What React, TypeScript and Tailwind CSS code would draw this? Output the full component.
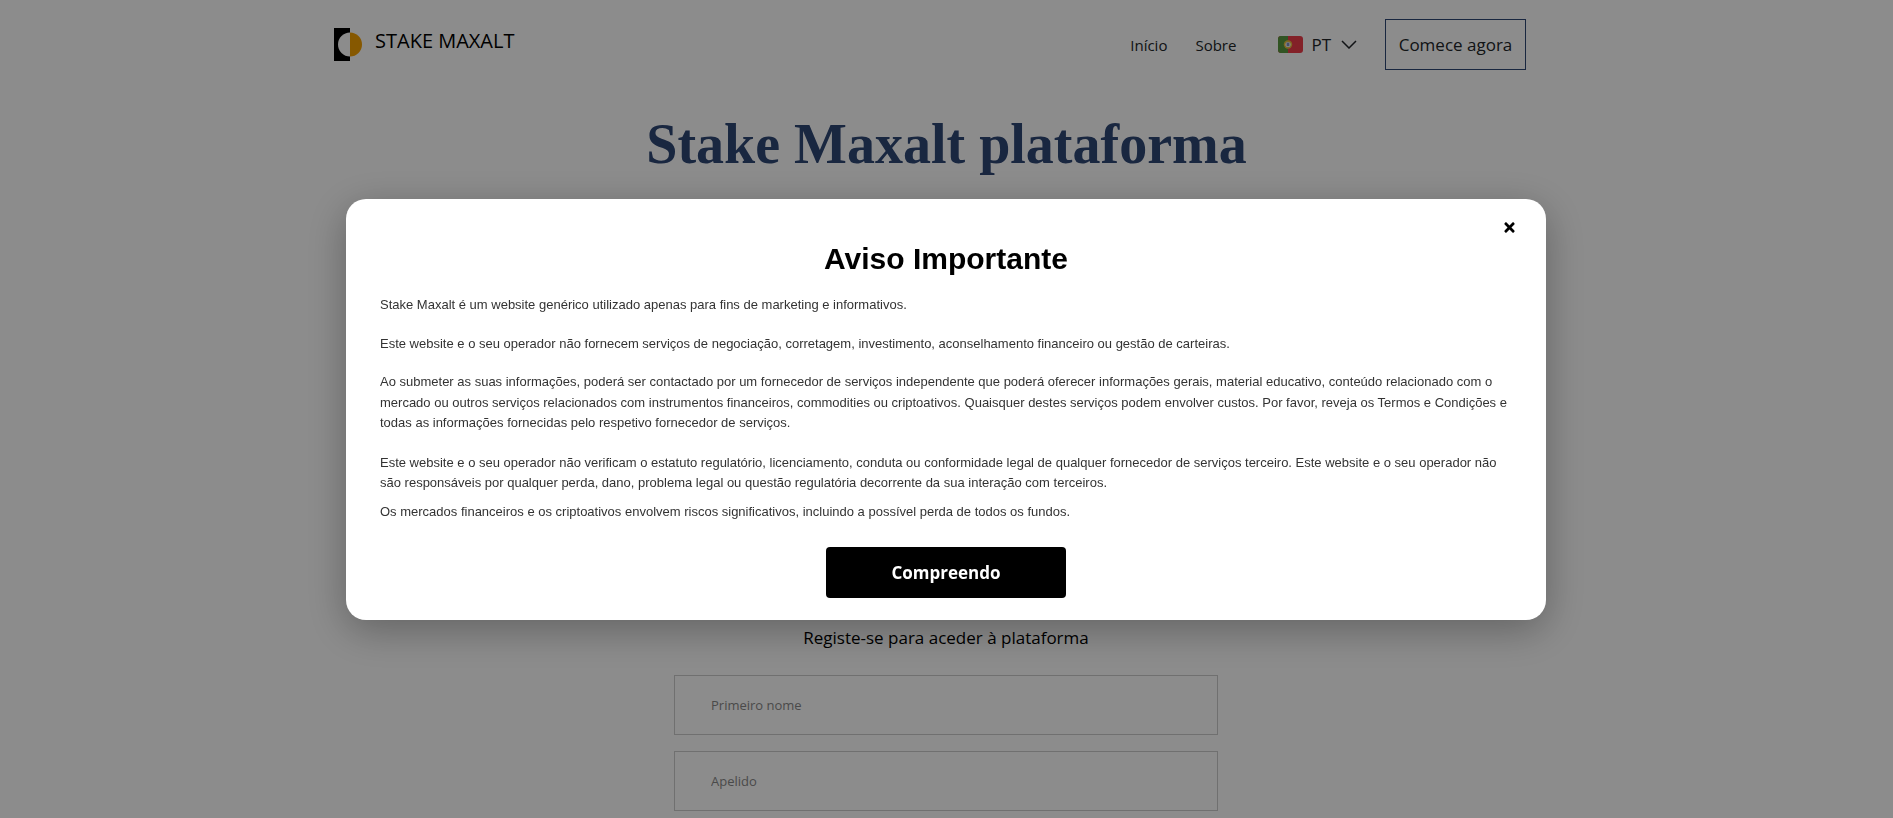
import { FaTimes } from 'react-icons/fa';

const bodyFont = "font-['Open_Sans','Noto_Sans',sans-serif]";

function Logo() {
  return (
    <svg width="28" height="33" viewBox="0 0 28 33" className="block">
      <rect x="0" y="0" width="16" height="33" fill="#000" />
      <path d="M16 4.5a12 12 0 0 0 0 24z" fill="#fff" />
      <path d="M16 4.5a12 12 0 0 1 0 24z" fill="#f5a000" />
    </svg>
  );
}

function Flag() {
  return (
    <svg width="25" height="17" viewBox="0 0 25 17" className="block">
      <rect width="25" height="17" rx="3" fill="#ee3c4a" />
      <path d="M3 0h7v17H3a3 3 0 0 1-3-3V3a3 3 0 0 1 3-3z" fill="#5a9a40" />
      <circle cx="10" cy="8.5" r="4.2" fill="#e8c040" />
      <circle cx="10" cy="8.5" r="2.6" fill="#fff" />
      <rect x="8.6" y="6.6" width="2.8" height="3.6" fill="#8090c0" />
    </svg>
  );
}

const paragraphs = [
  { text: 'Stake Maxalt é um website genérico utilizado apenas para fins de marketing e informativos.', mb: 'mb-[18px]' },
  { text: 'Este website e o seu operador não fornecem serviços de negociação, corretagem, investimento, aconselhamento financeiro ou gestão de carteiras.', mb: 'mb-[18px]' },
  { text: 'Ao submeter as suas informações, poderá ser contactado por um fornecedor de serviços independente que poderá oferecer informações gerais, material educativo, conteúdo relacionado com o mercado ou outros serviços relacionados com instrumentos financeiros, commodities ou criptoativos. Quaisquer destes serviços podem envolver custos. Por favor, reveja os Termos e Condições e todas as informações fornecidas pelo respetivo fornecedor de serviços.', mb: 'mb-[19px]' },
  { text: 'Este website e o seu operador não verificam o estatuto regulatório, licenciamento, conduta ou conformidade legal de qualquer fornecedor de serviços terceiro. Este website e o seu operador não são responsáveis por qualquer perda, dano, problema legal ou questão regulatória decorrente da sua interação com terceiros.', mb: 'mb-2' },
  { text: 'Os mercados financeiros e os criptoativos envolvem riscos significativos, incluindo a possível perda de todos os fundos.', mb: 'mb-[25px]' },
];

export default function App() {
  return (
    <div className={`h-screen overflow-hidden bg-white text-[#212529] ${bodyFont}`}>
      <div className="mx-auto w-[1225px]">
        {/* Header */}
        <header className="flex w-[1192px] justify-between pt-[19px]">
          <div className="flex items-start pt-[9px] gap-[13px]">
            <Logo />
            <span className="text-[20px] leading-[28px] text-black -mt-[1px]">STAKE MAXALT</span>
          </div>
          <div className="flex items-center">
            <a className="text-[15px] mr-[28px] pt-[2px]">Início</a>
            <a className="text-[15px] mr-[42px] pt-[2px]">Sobre</a>
            <Flag />
            <span className="ml-[8px] text-[17px]">PT</span>
            <svg width="16" height="9" viewBox="0 0 16 9" className="ml-[10px]" fill="none" stroke="#212529" strokeWidth="1.5">
              <path d="M1 1l7 7 7-7" />
            </svg>
            <a className="ml-[28px] h-[51px] w-[141px] border border-[#2f4775] flex items-center justify-center text-[17px]">
              Comece agora
            </a>
          </div>
        </header>

        <h1 className="mt-[34px] text-center font-['Liberation_Serif',serif] font-bold text-[56px] leading-[80px] text-[#2f4775]">
          Stake Maxalt plataforma
        </h1>

        {/* Form behind the dialog */}
        <div className="mt-[440px] pr-[1px] flex flex-col items-center">
          <p className="text-[17px] leading-[27px] text-black">Registe-se para aceder à plataforma</p>
          <input
            placeholder="Primeiro nome"
            className="mt-[24px] h-[60px] w-[544px] border border-[#ccc] pl-[36px] text-[13px] placeholder:text-[#888]"
          />
          <input
            placeholder="Apelido"
            className="mt-[16px] h-[60px] w-[544px] border border-[#ccc] pl-[36px] text-[13px] placeholder:text-[#888]"
          />
        </div>
      </div>

      {/* Dialog */}
      <div className="fixed inset-0 bg-black/45 flex items-center justify-center pr-[1px] pt-[1px]">
        <div className="relative w-[1200px] rounded-[20px] bg-white px-[34px] pt-[38px] pb-[22px] shadow-[0_10px_40px_rgba(0,0,0,0.3)] font-['Liberation_Sans',Arial,sans-serif]">
          <button className="absolute right-[29px] top-[21px] text-black">
            <FaTimes size={15} />
          </button>
          <h2 className="text-center text-[30px] leading-[44px] font-bold text-black mb-[14px]">Aviso Importante</h2>
          {paragraphs.map((p, i) => (
            <p key={i} className={`text-[13px] leading-[20.5px] text-[#333] ${p.mb}`}>
              {p.text}
            </p>
          ))}
          <div className="flex justify-center">
            <button className={`h-[51px] w-[240px] rounded-[4px] bg-black text-white text-[17px] font-bold ${bodyFont}`}>
              Compreendo
            </button>
          </div>
        </div>
      </div>
    </div>
  );
}
